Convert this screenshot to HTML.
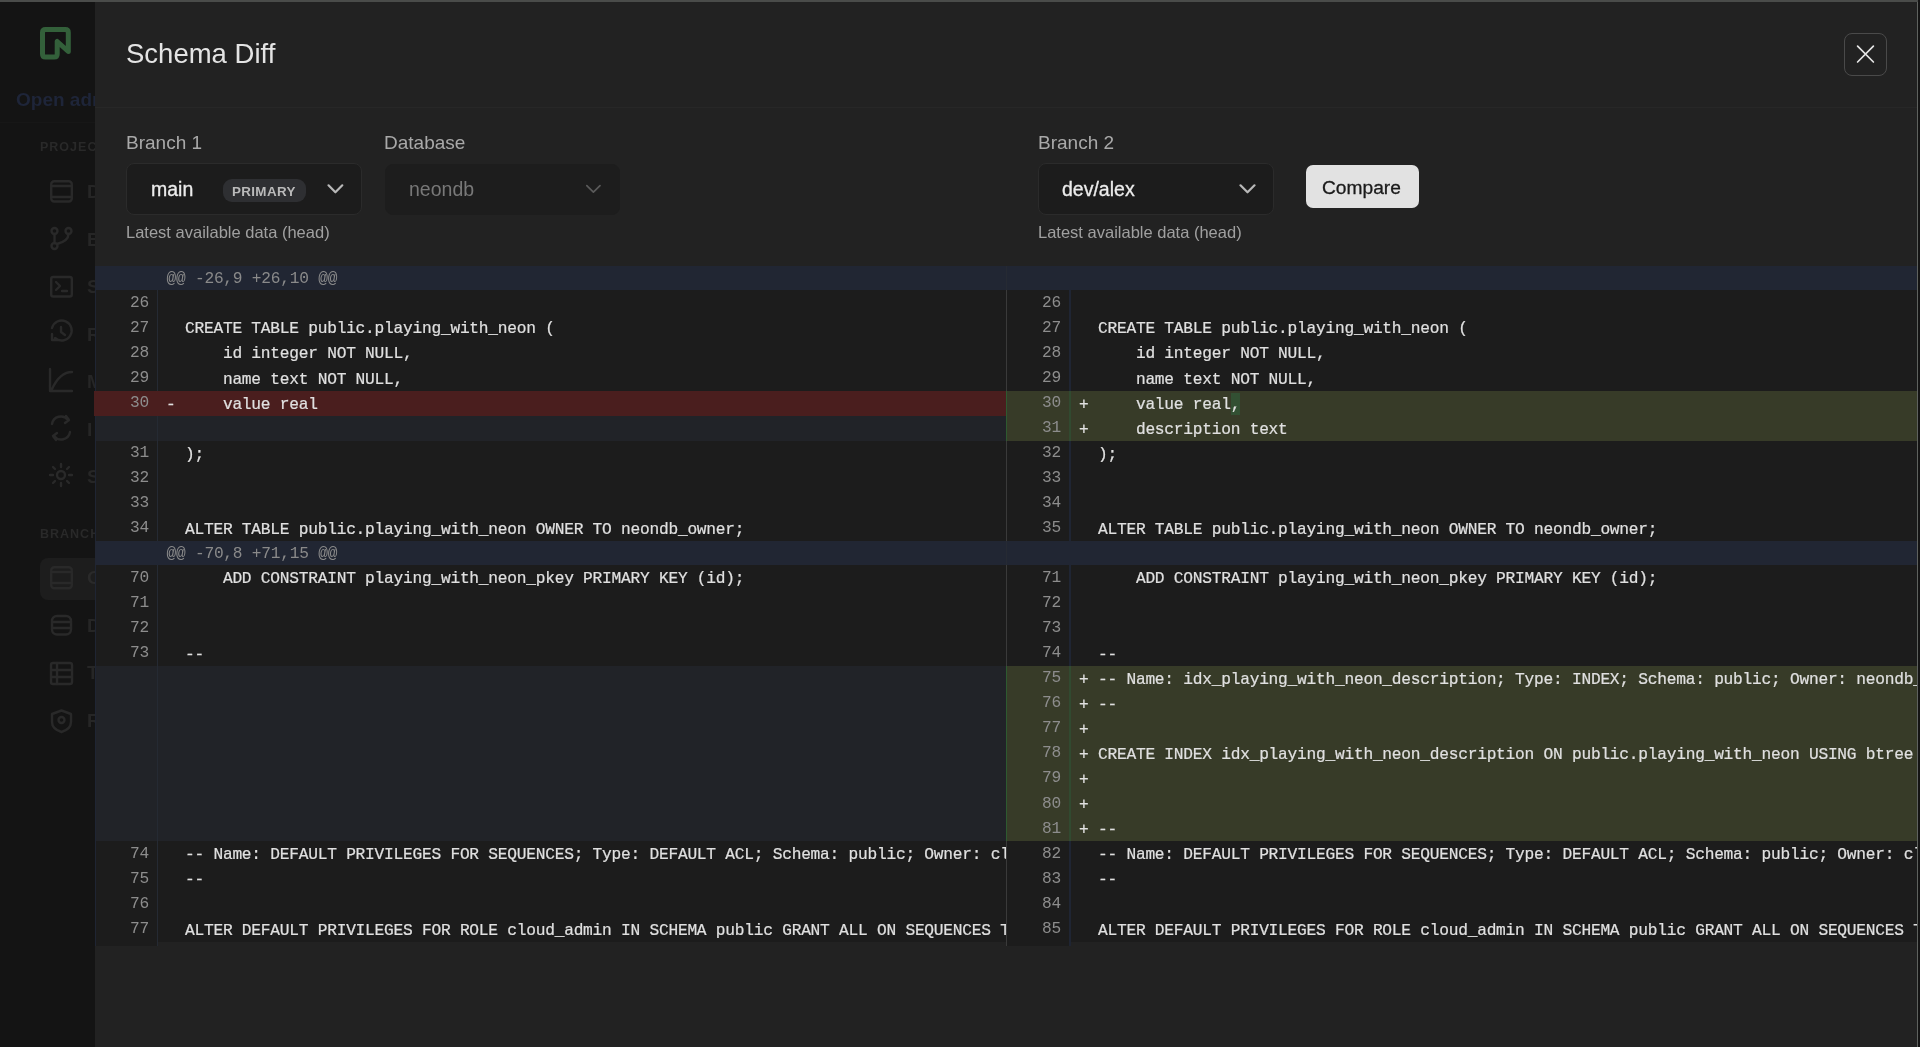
<!DOCTYPE html>
<html><head><meta charset="utf-8">
<style>
*{box-sizing:border-box;margin:0;padding:0}
body{-webkit-font-smoothing:antialiased}
html,body{width:1920px;height:1047px;overflow:hidden;background:#141414;font-family:"Liberation Sans",sans-serif}
.abs{position:absolute;white-space:pre;line-height:1}
#topline{position:absolute;left:0;top:0;width:1918px;height:2px;background:#4a4c4a}
#modal{position:absolute;left:95px;top:2px;width:1823px;height:1045px;background:#222222;border-right:1px solid #5f625f}
.sep{position:absolute;left:95px;top:107px;width:1822px;height:1px;background:#272727}
.lbl{font-size:19px;color:#a9a9a9}
.sel{position:absolute;background:#1c1c1c;border:1px solid #2b2b2b;border-radius:8px}
.seltxt{font-size:19.5px;color:#ececec;-webkit-text-stroke:0.3px #ececec}
.hint{font-size:16.5px;color:#a0a0a0}
/* diff */
#diff{position:absolute;left:95px;top:266px;width:1822px;height:680px}
.row{position:absolute;left:0;width:1822px;height:25px}
.hunk{background:#212633}
.hk{position:absolute;left:71.5px;top:calc(0.5px + var(--o));color:#8a8a8a}
.hdiv{position:absolute;left:911px;top:0;width:1px;height:100%;background:#262a33}
.panel{position:absolute;top:0;height:100%}
.pl{left:0;width:911px}
.pr{left:911px;width:911px}
.gut{position:absolute;left:0;top:0;height:100%;background:#1c1c1c}
.pl .gut{width:63px;border-left:1px solid #1f2533;border-right:1px solid #252a33}
.pr .gut{width:65px;border-left:1px solid #3a3a3a;border-right:2px solid #1f2533}
.code{position:absolute;top:0;right:0;height:100%;background:#1c1c1c;overflow:hidden}
.pl .code{left:63px}
.pr .code{left:65px}
.mono{font-family:"Liberation Mono",monospace;font-size:16.2px;letter-spacing:-0.235px;white-space:pre;line-height:25px}
.ln{position:absolute;right:8px;top:calc(0.4px + var(--o));color:#8d8d8d}
.mk{position:absolute;left:8px;top:calc(2px + var(--o));color:#e0e0e0;-webkit-text-stroke:0.2px #e0e0e0}
.ct{position:absolute;left:27px;top:calc(2px + var(--o));color:#e0e0e0;-webkit-text-stroke:0.2px #e0e0e0}
.hl{background:#325033;padding:3px 0 1px}
.del .gut,.del .code{background:#4a1e1e}
.pl.del .gut{left:-1px;width:64px;border-left-color:#4a1e1e;border-right-color:#4a1e1e}
.add .gut,.add .code{background:#373b28}
.pr.add .gut{border-left-color:#2e5a30;border-right-color:#314a30}
.fill .gut,.fill .code{background:#212328}
</style></head><body><div id="root" style="position:absolute;left:0;top:0;width:1920px;height:1047px;will-change:transform">
<div id="topline"></div>
<div id="sb" style="position:absolute;left:0;top:2px;width:95px;height:1045px;background:#141414;overflow:hidden">
<svg style="position:absolute;left:39px;top:21px" width="34" height="38" viewBox="0 0 34 38"><path d="M3.5 30 V9.5 Q3.5 6.5 6.5 6.5 H26.3 Q29.3 6.5 29.3 9.5 V28.5 L18.2 18.5 V31 Q18.2 34 15.2 34 H6.5 Q3.5 34 3.5 31 Z" fill="none" stroke="#33603a" stroke-width="5" stroke-linejoin="round"/></svg>

<div class="abs" style="left:16px;top:88px;font-size:19px;font-weight:bold;color:#1e2539">Open admin</div>

<div style="position:absolute;left:0;top:120px;width:95px;height:1px;background:#171717"></div>
<div class="abs" style="left:40px;top:139px;font-size:12.5px;font-weight:bold;color:#292929;letter-spacing:1px">PROJECT</div>
<div class="abs" style="left:40px;top:526px;font-size:12.5px;font-weight:bold;color:#292929;letter-spacing:1px">BRANCH</div>
<div style="position:absolute;left:40px;top:556px;width:70px;height:42px;border-radius:8px;background:#1d1d1d"></div>
<svg style="position:absolute;left:0;top:0" width="95" height="1045" viewBox="0 2 95 1045" fill="none" stroke="#292929" stroke-width="2.4" stroke-linecap="round" stroke-linejoin="round">
 <rect x="51.2" y="181.2" width="20.6" height="20.3" rx="3"/><path d="M51 186 H72 M51 197 H72"/>
 <circle cx="54.5" cy="231" r="3"/><circle cx="68.5" cy="231" r="3"/><circle cx="54.5" cy="246" r="3"/><path d="M54.5 234 V243 M68.5 234 Q68.5 241 57 244"/>
 <rect x="51.2" y="277" width="20.6" height="19.5" rx="2"/><path d="M56 282 L60 286 L56 290 M62 291 H67"/>
 <path d="M52 328 A10 10 0 1 1 55 338 M52 334 V340 H58 M61 327 V332 L65 335"/>
 <path d="M50 369 V391 H72 M52 389 Q60 372 72 372"/>
 <path d="M52 424 A9 9 0 0 1 68 420 M70 432 A9 9 0 0 1 54 436 M66 416 L69 420 L65 423 M56 440 L53 436 L57 433"/>
 <circle cx="61" cy="475" r="4"/><path d="M61 464 V467 M61 483 V486 M50 475 H53 M69 475 H72 M53 467 L55 469 M67 481 L69 483 M53 483 L55 481 M67 469 L69 467"/>
 <rect x="51.2" y="567.2" width="20.6" height="21" rx="3"/><path d="M51 572 H72 M51 583 H72"/>
 <rect x="52" y="616" width="19" height="18.5" rx="5"/><path d="M52 622 H71 M52 628 H71"/>
 <rect x="51" y="663" width="21" height="21" rx="2"/><path d="M51 670 H72 M51 677 H72 M57 663 V684"/>
 <path d="M61.5 710.5 L71 714 V722 Q71 729 61.5 732 Q52 729 52 722 V714 Z"/><circle cx="61.5" cy="720" r="3"/>
</svg>
<div class="abs" style="left:87px;top:180px;font-size:19px;font-weight:bold;color:#262626">D</div>
<div class="abs" style="left:87px;top:228px;font-size:19px;font-weight:bold;color:#262626">B</div>
<div class="abs" style="left:87px;top:275px;font-size:19px;font-weight:bold;color:#262626">S</div>
<div class="abs" style="left:87px;top:323px;font-size:19px;font-weight:bold;color:#262626">R</div>
<div class="abs" style="left:87px;top:370px;font-size:19px;font-weight:bold;color:#262626">M</div>
<div class="abs" style="left:87px;top:418px;font-size:19px;font-weight:bold;color:#262626">I</div>
<div class="abs" style="left:87px;top:465px;font-size:19px;font-weight:bold;color:#262626">S</div>
<div class="abs" style="left:87px;top:566px;font-size:19px;font-weight:bold;color:#2a2a2a">O</div>
<div class="abs" style="left:87px;top:614px;font-size:19px;font-weight:bold;color:#262626">D</div>
<div class="abs" style="left:87px;top:661px;font-size:19px;font-weight:bold;color:#262626">T</div>
<div class="abs" style="left:87px;top:709px;font-size:19px;font-weight:bold;color:#262626">R</div>
</div>
<div id="modal"></div>
<div class="sep"></div>
<div class="abs" style="left:126px;top:40.3px;font-size:27.5px;color:#e4e4e4">Schema Diff</div>

<div class="abs lbl" style="left:126px;top:132.9px">Branch 1</div>
<div class="abs lbl" style="left:384px;top:132.9px">Database</div>
<div class="abs lbl" style="left:1038px;top:132.9px">Branch 2</div>

<div class="sel" style="left:126px;top:163px;width:236px;height:52px"></div>
<div class="abs seltxt" style="left:151px;top:179.7px">main</div>
<div style="position:absolute;left:223px;top:179px;width:83px;height:23px;border-radius:9px;background:#2e2f32"></div>
<div class="abs" style="left:232px;top:185px;font-size:13.4px;font-weight:bold;color:#bababa;letter-spacing:0.35px">PRIMARY</div>

<div class="sel" style="left:385px;top:164px;width:235px;height:51px;background:#1d1d1d;border-color:#1d1d1d"></div>
<div class="abs seltxt" style="left:409px;top:179.7px;color:#787878;-webkit-text-stroke:0">neondb</div>

<div class="sel" style="left:1038px;top:163px;width:236px;height:52px"></div>
<div class="abs seltxt" style="left:1062px;top:179.7px">dev/alex</div>

<div style="position:absolute;left:1306px;top:165px;width:113px;height:43px;border-radius:7px;background:#e2e2e2"></div>
<div class="abs" style="left:1322px;top:178.2px;font-size:19.2px;color:#1a1a1a;-webkit-text-stroke:0.3px #1a1a1a">Compare</div>

<svg style="position:absolute;left:326px;top:183px" width="18" height="12" viewBox="0 0 18 12"><path d="M2.5 2.3 L9.4 9.3 L16.3 2.3" fill="none" stroke="#b8b8b8" stroke-width="2.2" stroke-linecap="round" stroke-linejoin="round"/></svg>
<svg style="position:absolute;left:585px;top:183px" width="18" height="12" viewBox="0 0 18 12"><path d="M1.8 2.6 L8.4 9.2 L15 2.6" fill="none" stroke="#5a5a5a" stroke-width="1.7" stroke-linecap="round" stroke-linejoin="round"/></svg>
<svg style="position:absolute;left:1238px;top:183px" width="18" height="12" viewBox="0 0 18 12"><path d="M2.5 2.3 L9.5 9.3 L16.5 2.3" fill="none" stroke="#b8b8b8" stroke-width="2.2" stroke-linecap="round" stroke-linejoin="round"/></svg>
<div style="position:absolute;left:1844px;top:33px;width:43px;height:43px;border:1px solid #4a4a4a;border-radius:8px"></div>
<svg style="position:absolute;left:1844px;top:33px" width="43" height="43" viewBox="0 0 43 43"><path d="M13.6 13.1 L29.4 29 M29.4 13.1 L13.6 29" stroke="#e6e6e6" stroke-width="1.7" stroke-linecap="round"/></svg>
<div class="abs hint" style="left:126px;top:224.3px">Latest available data (head)</div>
<div class="abs hint" style="left:1038px;top:224.3px">Latest available data (head)</div>

<div id="diff"><div class="row hunk" style="top:0px;height:24px;--o:0.00px"><span class="mono hk">@@ -26,9 +26,10 @@</span><div class="hdiv"></div></div>
<div class="row" style="top:24px;height:25px;--o:0.30px"><div class="panel pl ctx"><div class="gut"><span class="mono ln">26</span></div><div class="code"></div></div><div class="panel pr ctx"><div class="gut"><span class="mono ln">26</span></div><div class="code"></div></div></div>
<div class="row" style="top:49px;height:25px;--o:0.38px"><div class="panel pl ctx"><div class="gut"><span class="mono ln">27</span></div><div class="code"><span class="mono ct">CREATE TABLE public.playing_with_neon (</span></div></div><div class="panel pr ctx"><div class="gut"><span class="mono ln">27</span></div><div class="code"><span class="mono ct">CREATE TABLE public.playing_with_neon (</span></div></div></div>
<div class="row" style="top:74px;height:26px;--o:0.46px"><div class="panel pl ctx"><div class="gut"><span class="mono ln">28</span></div><div class="code"><span class="mono ct">    id integer NOT NULL,</span></div></div><div class="panel pr ctx"><div class="gut"><span class="mono ln">28</span></div><div class="code"><span class="mono ct">    id integer NOT NULL,</span></div></div></div>
<div class="row" style="top:100px;height:25px;--o:-0.46px"><div class="panel pl ctx"><div class="gut"><span class="mono ln">29</span></div><div class="code"><span class="mono ct">    name text NOT NULL,</span></div></div><div class="panel pr ctx"><div class="gut"><span class="mono ln">29</span></div><div class="code"><span class="mono ct">    name text NOT NULL,</span></div></div></div>
<div class="row" style="top:125px;height:25px;--o:-0.38px"><div class="panel pl del"><div class="gut"><span class="mono ln">30</span></div><div class="code"><span class="mono mk">-</span><span class="mono ct">    value real</span></div></div><div class="panel pr add"><div class="gut"><span class="mono ln">30</span></div><div class="code"><span class="mono mk">+</span><span class="mono ct">    value real<span class="hl">,</span></span></div></div></div>
<div class="row" style="top:150px;height:25px;--o:-0.30px"><div class="panel pl fill"><div class="gut"></div><div class="code"></div></div><div class="panel pr add"><div class="gut"><span class="mono ln">31</span></div><div class="code"><span class="mono mk">+</span><span class="mono ct">    description text</span></div></div></div>
<div class="row" style="top:175px;height:25px;--o:-0.22px"><div class="panel pl ctx"><div class="gut"><span class="mono ln">31</span></div><div class="code"><span class="mono ct">);</span></div></div><div class="panel pr ctx"><div class="gut"><span class="mono ln">32</span></div><div class="code"><span class="mono ct">);</span></div></div></div>
<div class="row" style="top:200px;height:25px;--o:-0.14px"><div class="panel pl ctx"><div class="gut"><span class="mono ln">32</span></div><div class="code"></div></div><div class="panel pr ctx"><div class="gut"><span class="mono ln">33</span></div><div class="code"></div></div></div>
<div class="row" style="top:225px;height:25px;--o:-0.06px"><div class="panel pl ctx"><div class="gut"><span class="mono ln">33</span></div><div class="code"></div></div><div class="panel pr ctx"><div class="gut"><span class="mono ln">34</span></div><div class="code"></div></div></div>
<div class="row" style="top:250px;height:25px;--o:0.02px"><div class="panel pl ctx"><div class="gut"><span class="mono ln">34</span></div><div class="code"><span class="mono ct">ALTER TABLE public.playing_with_neon OWNER TO neondb_owner;</span></div></div><div class="panel pr ctx"><div class="gut"><span class="mono ln">35</span></div><div class="code"><span class="mono ct">ALTER TABLE public.playing_with_neon OWNER TO neondb_owner;</span></div></div></div>
<div class="row hunk" style="top:275px;height:24px;--o:0.10px"><span class="mono hk">@@ -70,8 +71,15 @@</span><div class="hdiv"></div></div>
<div class="row" style="top:299px;height:25px;--o:0.40px"><div class="panel pl ctx"><div class="gut"><span class="mono ln">70</span></div><div class="code"><span class="mono ct">    ADD CONSTRAINT playing_with_neon_pkey PRIMARY KEY (id);</span></div></div><div class="panel pr ctx"><div class="gut"><span class="mono ln">71</span></div><div class="code"><span class="mono ct">    ADD CONSTRAINT playing_with_neon_pkey PRIMARY KEY (id);</span></div></div></div>
<div class="row" style="top:324px;height:26px;--o:0.48px"><div class="panel pl ctx"><div class="gut"><span class="mono ln">71</span></div><div class="code"></div></div><div class="panel pr ctx"><div class="gut"><span class="mono ln">72</span></div><div class="code"></div></div></div>
<div class="row" style="top:350px;height:25px;--o:-0.44px"><div class="panel pl ctx"><div class="gut"><span class="mono ln">72</span></div><div class="code"></div></div><div class="panel pr ctx"><div class="gut"><span class="mono ln">73</span></div><div class="code"></div></div></div>
<div class="row" style="top:375px;height:25px;--o:-0.36px"><div class="panel pl ctx"><div class="gut"><span class="mono ln">73</span></div><div class="code"><span class="mono ct">--</span></div></div><div class="panel pr ctx"><div class="gut"><span class="mono ln">74</span></div><div class="code"><span class="mono ct">--</span></div></div></div>
<div class="row" style="top:400px;height:25px;--o:-0.28px"><div class="panel pl fill"><div class="gut"></div><div class="code"></div></div><div class="panel pr add"><div class="gut"><span class="mono ln">75</span></div><div class="code"><span class="mono mk">+</span><span class="mono ct">-- Name: idx_playing_with_neon_description; Type: INDEX; Schema: public; Owner: neondb_owner</span></div></div></div>
<div class="row" style="top:425px;height:25px;--o:-0.20px"><div class="panel pl fill"><div class="gut"></div><div class="code"></div></div><div class="panel pr add"><div class="gut"><span class="mono ln">76</span></div><div class="code"><span class="mono mk">+</span><span class="mono ct">--</span></div></div></div>
<div class="row" style="top:450px;height:25px;--o:-0.12px"><div class="panel pl fill"><div class="gut"></div><div class="code"></div></div><div class="panel pr add"><div class="gut"><span class="mono ln">77</span></div><div class="code"><span class="mono mk">+</span></div></div></div>
<div class="row" style="top:475px;height:25px;--o:-0.04px"><div class="panel pl fill"><div class="gut"></div><div class="code"></div></div><div class="panel pr add"><div class="gut"><span class="mono ln">78</span></div><div class="code"><span class="mono mk">+</span><span class="mono ct">CREATE INDEX idx_playing_with_neon_description ON public.playing_with_neon USING btree (description);</span></div></div></div>
<div class="row" style="top:500px;height:25px;--o:0.04px"><div class="panel pl fill"><div class="gut"></div><div class="code"></div></div><div class="panel pr add"><div class="gut"><span class="mono ln">79</span></div><div class="code"><span class="mono mk">+</span></div></div></div>
<div class="row" style="top:525px;height:25px;--o:0.12px"><div class="panel pl fill"><div class="gut"></div><div class="code"></div></div><div class="panel pr add"><div class="gut"><span class="mono ln">80</span></div><div class="code"><span class="mono mk">+</span></div></div></div>
<div class="row" style="top:550px;height:25px;--o:0.20px"><div class="panel pl fill"><div class="gut"></div><div class="code"></div></div><div class="panel pr add"><div class="gut"><span class="mono ln">81</span></div><div class="code"><span class="mono mk">+</span><span class="mono ct">--</span></div></div></div>
<div class="row" style="top:575px;height:25px;--o:0.28px"><div class="panel pl ctx"><div class="gut"><span class="mono ln">74</span></div><div class="code"><span class="mono ct">-- Name: DEFAULT PRIVILEGES FOR SEQUENCES; Type: DEFAULT ACL; Schema: public; Owner: cloud_admin</span></div></div><div class="panel pr ctx"><div class="gut"><span class="mono ln">82</span></div><div class="code"><span class="mono ct">-- Name: DEFAULT PRIVILEGES FOR SEQUENCES; Type: DEFAULT ACL; Schema: public; Owner: cloud_admin</span></div></div></div>
<div class="row" style="top:600px;height:25px;--o:0.36px"><div class="panel pl ctx"><div class="gut"><span class="mono ln">75</span></div><div class="code"><span class="mono ct">--</span></div></div><div class="panel pr ctx"><div class="gut"><span class="mono ln">83</span></div><div class="code"><span class="mono ct">--</span></div></div></div>
<div class="row" style="top:625px;height:26px;--o:0.44px"><div class="panel pl ctx"><div class="gut"><span class="mono ln">76</span></div><div class="code"></div></div><div class="panel pr ctx"><div class="gut"><span class="mono ln">84</span></div><div class="code"></div></div></div>
<div class="row" style="top:651px;height:25px;--o:-0.48px"><div class="panel pl ctx"><div class="gut"><span class="mono ln">77</span></div><div class="code"><span class="mono ct">ALTER DEFAULT PRIVILEGES FOR ROLE cloud_admin IN SCHEMA public GRANT ALL ON SEQUENCES TO neon_superuser WITH GRANT OPTION;</span></div></div><div class="panel pr ctx"><div class="gut"><span class="mono ln">85</span></div><div class="code"><span class="mono ct">ALTER DEFAULT PRIVILEGES FOR ROLE cloud_admin IN SCHEMA public GRANT ALL ON SEQUENCES TO neon_superuser WITH GRANT OPTION;</span></div></div></div></div>
<div style="position:absolute;left:95px;top:940px;width:63px;height:6px;background:#1c1c1c;border-left:1px solid #1f2533;border-right:1px solid #252a33"></div>
<div style="position:absolute;left:1006px;top:940px;width:65px;height:6px;background:#1c1c1c;border-left:1px solid #3a3a3a;border-right:2px solid #1f2533"></div>
</div></body></html>
